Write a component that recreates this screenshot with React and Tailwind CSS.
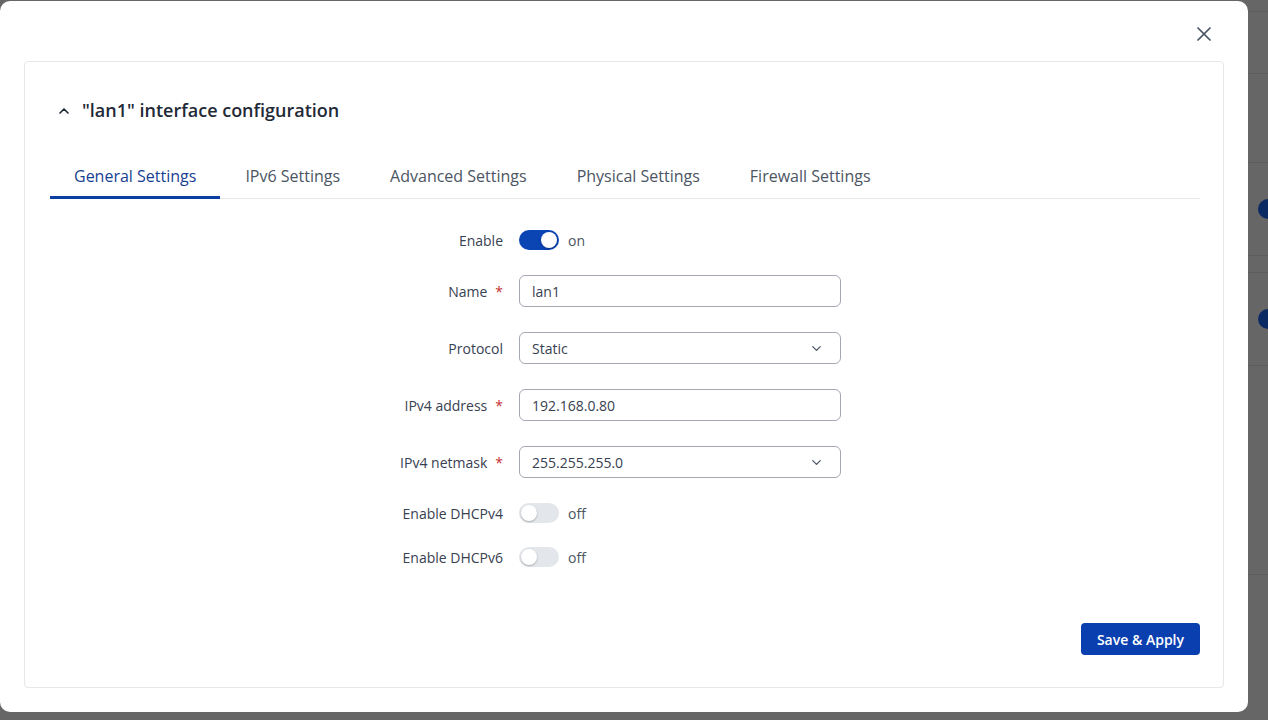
import { X, ChevronUp, ChevronDown } from "lucide-react";

const tabs = ["General Settings", "IPv6 Settings", "Advanced Settings", "Physical Settings", "Firewall Settings"];

function Toggle({ on }) {
    return (
        <div className="flex items-center gap-[9px]">
            <div
                className={
                    on
                        ? "flex h-5 w-10 items-center justify-end rounded-full bg-[#0b45b3] px-[2px]"
                        : "flex h-5 w-10 items-center justify-start rounded-full bg-[#e3e6ea] px-[2px]"
                }
            >
                <span className="h-4 w-4 rounded-full bg-white shadow-[0_1px_2px_rgba(0,0,0,0.25)]" />
            </div>
            <span className="text-[14px] text-[#4b5563]">{on ? "on" : "off"}</span>
        </div>
    );
}

function Row({ label, required, children, className }) {
    return (
        <div className={`flex items-center ${className}`}>
            <div className="flex w-[453px] shrink-0 justify-end text-[14px] text-[#374151]">
                <span>{label}</span>
                {required && <span className="ml-[8px] text-[#c53030]">*</span>}
            </div>
            <div className="ml-4">{children}</div>
        </div>
    );
}

function Field({ value, select }) {
    return (
        <div className="flex h-8 w-[322px] items-center justify-between rounded-md border border-[#a3a8b0] px-3 text-[14px] text-[#374151]">
            <span>{value}</span>
            {select && <ChevronDown size={15} strokeWidth={2} className="mr-[4px] text-[#4b5563]" />}
        </div>
    );
}

function Backdrop() {
    return (
        <div className="absolute inset-0 bg-[#666666]">
            <div className="flex flex-col">
                <div className="h-[12px] border-b border-[#5c5c5c]" />
                <div className="h-[62px] border-b border-[#5c5c5c]" />
                <div className="h-[89px] border-b border-[#5c5c5c]" />
                <div className="flex h-[93px] items-center border-b border-[#5c5c5c]">
                    <span className="ml-[1258px] h-5 w-5 shrink-0 rounded-full bg-[#0b2a63]" />
                </div>
                <div className="h-[17px] border-b border-[#5c5c5c]" />
                <div className="flex h-[93px] items-center border-b border-[#5c5c5c]">
                    <span className="ml-[1258px] h-5 w-5 shrink-0 rounded-full bg-[#0b2a63]" />
                </div>
                <div className="h-[209px] border-b border-[#5c5c5c]" />
            </div>
        </div>
    );
}

export default function App() {
    return (
        <div
            className="relative h-[720px] w-[1268px] overflow-hidden"
            style={{ fontFamily: '"Open Sans", "Noto Sans", sans-serif' }}
        >
            <Backdrop />
            <div className="absolute left-0 top-[1px] flex h-[711px] w-[1248px] flex-col rounded-[10px] bg-white">
                <div className="flex h-[60px] items-start justify-end pr-[32px] pt-[21px]">
                    <X size={24} strokeWidth={1.75} className="text-[#4b5563]" />
                </div>
                <div className="mx-6 flex h-[627px] flex-col rounded border border-[#e5e7eb] pl-[25px] pr-[23px]">
                    <div className="mt-[35px] flex items-center gap-[10px] pl-[6px]">
                        <ChevronUp size={16} strokeWidth={2.5} className="text-[#1f2937]" />
                        <h2 className="text-[18px] font-semibold text-[#1f2937]">"lan1" interface configuration</h2>
                    </div>
                    <div className="mt-[40px] flex border-b border-[#e5e7eb]">
                        {tabs.map((tab, i) => (
                            <div
                                key={tab}
                                className={
                                    i === 0
                                        ? "-mb-px border-b-[3px] border-[#0b3fa3] px-6 pb-[7px] text-[16px] text-[#173f91]"
                                        : "px-[25px] pb-[10px] text-[16px] text-[#4b5563]"
                                }
                            >
                                {tab}
                            </div>
                        ))}
                    </div>
                    <div className="flex flex-col">
                        <Row label="Enable" className="mt-[31px] h-5">
                            <Toggle on />
                        </Row>
                        <Row label="Name" required className="mt-[25px]">
                            <Field value="lan1" />
                        </Row>
                        <Row label="Protocol" className="mt-[25px]">
                            <Field value="Static" select />
                        </Row>
                        <Row label="IPv4 address" required className="mt-[25px]">
                            <Field value="192.168.0.80" />
                        </Row>
                        <Row label="IPv4 netmask" required className="mt-[25px]">
                            <Field value="255.255.255.0" select />
                        </Row>
                        <Row label="Enable DHCPv4" className="mt-[25px] h-5">
                            <Toggle />
                        </Row>
                        <Row label="Enable DHCPv6" className="mt-[24px] h-5">
                            <Toggle />
                        </Row>
                    </div>
                    <div className="mt-[56px] flex justify-end">
                        <button className="h-[32px] rounded bg-[#0a3fb0] px-4 text-[14px] font-semibold text-white">
                            Save &amp; Apply
                        </button>
                    </div>
                </div>
            </div>
        </div>
    );
}
